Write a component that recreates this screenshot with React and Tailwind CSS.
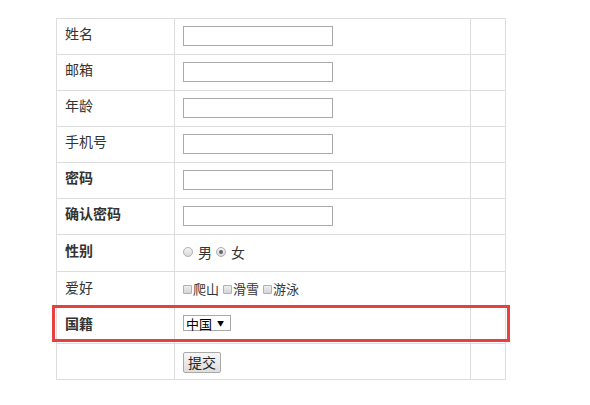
const font = { fontFamily: '"Noto Sans CJK SC", "Liberation Sans", sans-serif' };

const textRows = [
  ["姓名", false],
  ["邮箱", false],
  ["年龄", false],
  ["手机号", false],
  ["密码", true],
  ["确认密码", true],
];

function TextBox() {
  return <div className="h-[20px] w-[150px] border border-[#a9a9a9] bg-white" />;
}

function Radio({ checked, label }) {
  return (
    <span className="inline-flex items-center">
      <span className="flex h-[10px] w-[10px] items-center justify-center rounded-full border border-[#b0b0b0] bg-gradient-to-b from-[#f4f4f4] to-[#d8d8d8]">
        {checked && <span className="h-[4px] w-[4px] rounded-full bg-[#666]" />}
      </span>
      <span className="ml-[5px]">{label}</span>
    </span>
  );
}

function Check({ label }) {
  return (
    <span className="inline-flex items-center">
      <span className="h-[9px] w-[9px] rounded-[1px] border border-[#b0b0b0] bg-gradient-to-b from-[#eeeeee] to-[#d4d4d4]" />
      <span className="ml-[1px]">{label}</span>
    </span>
  );
}

export default function App() {
  return (
    <div className="relative h-[405px] w-[590px] bg-white text-[14px] text-[#333]" style={font}>
      <div className="pl-[56px] pt-[18px]">
        <table className="w-[450px] border-collapse">
          <colgroup>
            <col className="w-[118px]" />
            <col className="w-[296px]" />
            <col />
          </colgroup>
          <tbody>
            {textRows.map(([label, bold]) => (
              <tr key={label} className="h-[36px]">
                <td className={`border border-[#ddd] px-2 pt-[4px] align-top leading-5 ${bold ? "font-bold" : ""}`}>{label}</td>
                <td className="border border-[#ddd] px-2 pt-[7px] align-top">
                  <TextBox />
                </td>
                <td className="border border-[#ddd]" />
              </tr>
            ))}
            <tr className="h-[37px]">
              <td className="border border-[#ddd] px-2 pt-[5px] align-top font-bold leading-5">性别</td>
              <td className="border border-[#ddd] px-2 pt-[7px] align-top leading-5">
                <div className="flex items-center gap-[4px] text-[14px]">
                  <Radio label="男" />
                  <Radio checked label="女" />
                </div>
              </td>
              <td className="border border-[#ddd]" />
            </tr>
            <tr className="h-[36px]">
              <td className="border border-[#ddd] px-2 pt-[5px] align-top leading-5">爱好</td>
              <td className="border border-[#ddd] px-2 pt-[7px] align-top leading-5">
                <div className="flex items-center gap-[4px] text-[13px]">
                  <Check label="爬山" />
                  <Check label="滑雪" />
                  <Check label="游泳" />
                </div>
              </td>
              <td className="border border-[#ddd]" />
            </tr>
            <tr className="h-[36px]">
              <td className="border border-[#ddd] px-2 pt-[5px] align-top font-bold leading-5">国籍</td>
              <td className="border border-[#ddd] px-2 pt-[7px] align-top">
                <div className="flex h-[16px] w-[48px] items-center justify-between border border-[#a9a9a9] bg-white pl-[2px] pr-[6px] text-[13px] leading-none text-black">
                  <span>中国</span>
                  <span className="text-[7px]">▼</span>
                </div>
              </td>
              <td className="border border-[#ddd]" />
            </tr>
            <tr className="h-[36px]">
              <td className="border border-[#ddd]" />
              <td className="border border-[#ddd] px-2 pt-[8px] align-top">
                <div className="flex h-[21px] w-[38px] items-center justify-center rounded-[2px] border border-[#a9a9a9] bg-gradient-to-b from-[#f6f6f6] to-[#dedede] text-[14px] text-[#222]">
                  提交
                </div>
              </td>
              <td className="border border-[#ddd]" />
            </tr>
          </tbody>
        </table>
      </div>
      <div className="absolute left-[52px] top-[305px] h-[37px] w-[458px] border-[3px] border-[#e8403f]" />
    </div>
  );
}
